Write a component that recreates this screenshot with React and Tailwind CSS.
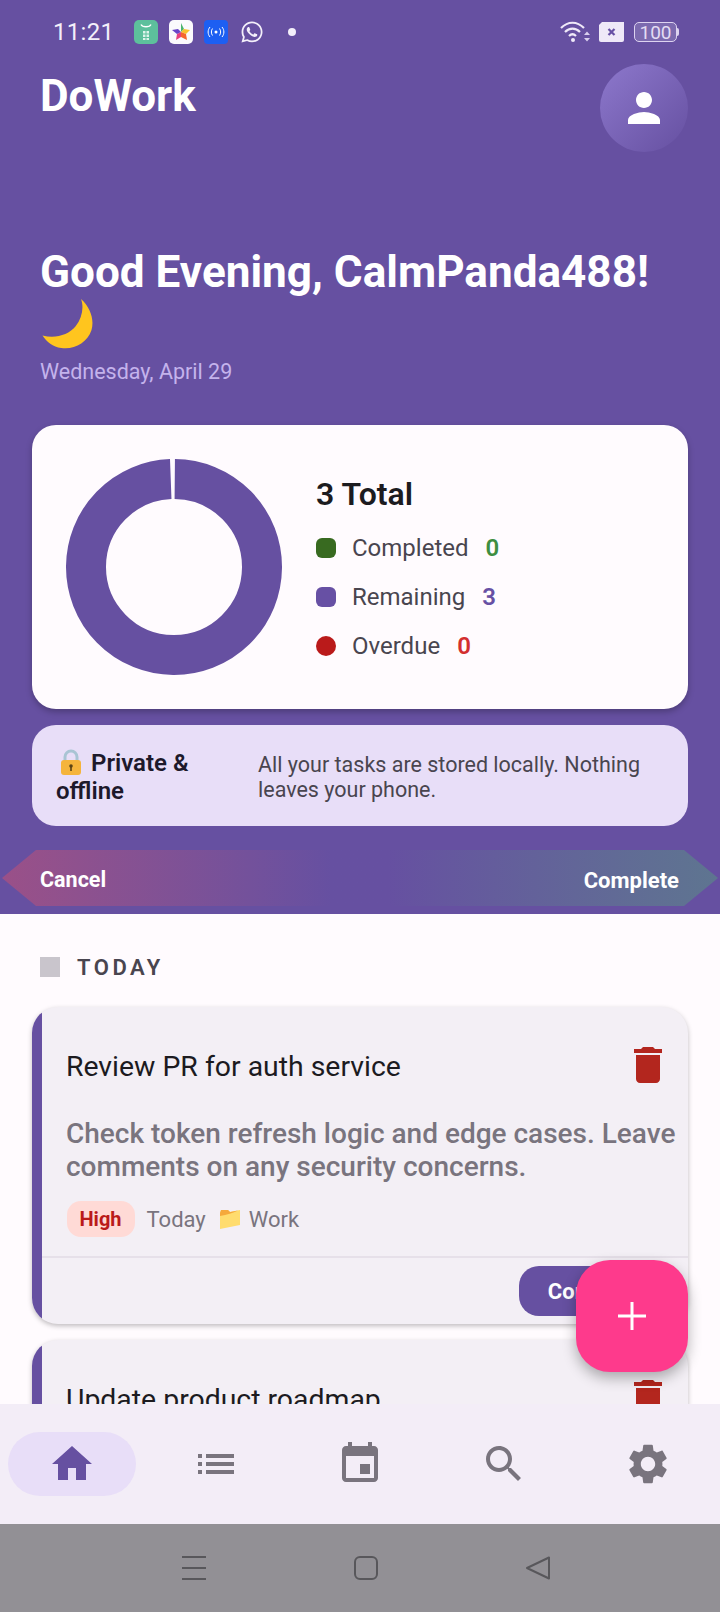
import { FaWhatsapp } from "react-icons/fa"

const legend = [
  { label: "Completed", value: 0, swatch: "bg-[#386A20] rounded-[6px]", text: "text-[#3E8E41]" },
  { label: "Remaining", value: 3, swatch: "bg-[#6750A4] rounded-[6px]", text: "text-[#6750A4]" },
  { label: "Overdue", value: 0, swatch: "bg-[#BA1A1A] rounded-full", text: "text-[#D32F2F]" },
]

const navIcons = [
  "M10 20v-6h4v6h5v-8h3L12 3 2 12h3v8z",
  "M3 13h2v-2H3v2zm0 4h2v-2H3v2zm0-8h2V7H3v2zm4 4h14v-2H7v2zm0 4h14v-2H7v2zM7 7v2h14V7H7z",
  "M17 12h-5v5h5v-5zM16 1v2H8V1H6v2H5c-1.11 0-1.99.9-1.99 2L3 19c0 1.1.89 2 2 2h14c1.1 0 2-.9 2-2V5c0-1.1-.9-2-2-2h-1V1h-2zm3 18H5V8h14v11z",
  "M15.5 14h-.79l-.28-.27C15.41 12.59 16 11.11 16 9.5 16 5.91 13.09 3 9.5 3S3 5.91 3 9.5 5.91 16 9.5 16c1.61 0 3.09-.59 4.23-1.57l.27.28v.79l5 4.99L20.49 19l-4.99-5zm-6 0C7.01 14 5 11.99 5 9.5S7.01 5 9.5 5 14 7.01 14 9.5 11.99 14 9.5 14z",
  "M19.14 12.94c.04-.3.06-.61.06-.94 0-.32-.02-.64-.07-.94l2.03-1.58c.18-.14.23-.41.12-.61l-1.92-3.32c-.12-.22-.37-.29-.59-.22l-2.39.96c-.5-.38-1.03-.7-1.62-.94l-.36-2.54c-.04-.24-.24-.41-.48-.41h-3.84c-.24 0-.43.17-.47.41l-.36 2.54c-.59.24-1.13.57-1.62.94l-2.39-.96c-.22-.08-.47 0-.59.22L2.74 8.87c-.12.21-.08.47.12.61l2.03 1.58c-.05.3-.09.63-.09.94s.02.64.07.94l-2.03 1.58c-.18.14-.23.41-.12.61l1.92 3.32c.12.22.37.29.59.22l2.39-.96c.5.38 1.03.7 1.62.94l.36 2.54c.05.24.24.41.48.41h3.84c.24 0 .44-.17.47-.41l.36-2.54c.59-.24 1.13-.56 1.62-.94l2.39.96c.22.08.47 0 .59-.22l1.92-3.32c.12-.22.07-.47-.12-.61l-2.01-1.58zM12 15.6c-1.98 0-3.6-1.62-3.6-3.6s1.62-3.6 3.6-3.6 3.6 1.62 3.6 3.6-1.62 3.6-3.6 3.6z",
]

const TrashIcon = () => (
  <svg viewBox="0 0 24 24" className="w-12 h-12 shrink-0 fill-[#B3261E]">
    <path d="M6 19c0 1.1.9 2 2 2h8c1.1 0 2-.9 2-2V7H6v12zM19 4h-3.5l-1-1h-5l-1 1H5v2h14V4z" />
  </svg>
)

const StatusBar = () => (
  <div className="h-16 flex items-center pl-[53px] pr-[41px]">
    <span className="text-[24px] text-[#F3EFFA] w-[81px] tracking-[0.3px]">11:21</span>
    {/* notification icons */}
    <svg viewBox="0 0 24 24" className="w-6 h-6">
      <rect width="24" height="24" rx="5" fill="#5DC09C" />
      <path d="M7 4.5c1.5 3 8.500 3 10 0" fill="none" stroke="#fff" strokeWidth="1.3" />
      <path d="M9 11h2.500v2.500H9zM12.500 11H15v2.500h-2.500zM9 14.500h2.500V17H9zM12.500 14.500H15V17h-2.500zM9 18h2.500v2H9zM12.500 18H15v2h-2.500z" fill="#DDF3EA" />
    </svg>
    <svg viewBox="0 0 24 24" className="w-6 h-6 ml-[11px]">
      <rect width="24" height="24" rx="5" fill="#FBFAFD" />
      <path d="M12 3l3 6-3 3z" fill="#4CB56E" />
      <path d="M15 9l6 1-4 4-5-2z" fill="#F9C22E" />
      <path d="M17 14l1 6-6-3v-5z" fill="#F5662E" />
      <path d="M12 17l-5 3 1-6 4-2z" fill="#E8417E" />
      <path d="M8 14l-5-4 6-1 3 3z" fill="#6A45C8" />
    </svg>
    <svg viewBox="0 0 24 24" className="w-6 h-6 ml-[11px]">
      <rect width="24" height="24" rx="4" fill="#1D5FF2" />
      <circle cx="12" cy="12" r="1.500" fill="#fff" />
      <path d="M8.500 8.500c-1.500 2-1.500 5 0 7M15.500 8.500c1.500 2 1.500 5 0 7M6 7c-2.500 3-2.500 7 0 10M18 7c2.500 3 2.500 7 0 10" fill="none" stroke="#fff" strokeWidth="1" />
    </svg>
    <FaWhatsapp className="w-6 h-6 ml-3 text-[#F3EFFA]" />
    <span className="w-2 h-2 rounded-full bg-[#F3EFFA] ml-6" />

    <div className="ml-auto flex items-center">
      <svg viewBox="0 0 30 24" className="w-[30px] h-6">
        <path d="M1 8c7-7 16-7 23 0M5 12c4.500-4.500 10.500-4.500 15 0M9 16c2.500-2.500 4.500-2.500 7 0" fill="none" stroke="#EFE9F8" strokeWidth="2.200" />
        <circle cx="13" cy="20" r="2" fill="#EFE9F8" />
        <path d="M24 15l3-3.500 3 3.500zM24 18l3 3.500 3-3.500z" fill="#D9CFEE" />
      </svg>
      <svg viewBox="0 0 25 20" className="w-[25px] h-5 ml-[9px]">
        <path d="M3 0h22v18a2 2 0 0 1-2 2H2a2 2 0 0 1-2-2V3z" fill="#EFE9F8" />
        <path d="M9.500 7l6 6M15.500 7l-6 6" stroke="#6750A4" strokeWidth="2.200" />
      </svg>
      <div className="ml-[10px] flex items-center">
        <div className="w-[43px] h-5 rounded-[5px] border-[1.5px] border-[#DDD3F0] bg-white/15 flex items-center justify-center">
          <span className="text-[19px] leading-none text-[#E4DCF3]">100</span>
        </div>
        <div className="w-[2px] h-2 bg-[#DDD3F0] rounded-r-sm" />
      </div>
    </div>
  </div>
)

const Hero = () => (
  <div className="h-[914px] shrink-0 bg-[#6650A1]">
    <StatusBar />

    <div className="flex items-start justify-between pl-10 pr-8">
      <h2 className="pt-px text-[44px] leading-[62px] font-bold text-white">DoWork</h2>
      <div className="w-[88px] h-[88px] rounded-full bg-gradient-to-br from-[#8D78CC] to-[#6650A1] flex items-center justify-center">
        <svg viewBox="0 0 24 24" className="w-12 h-12 fill-white">
          <path d="M12 12c2.210 0 4-1.790 4-4s-1.790-4-4-4-4 1.790-4 4 1.790 4 4 4zm0 2c-2.670 0-8 1.340-8 4v2h16v-2c0-2.660-5.330-4-8-4z" />
        </svg>
      </div>
    </div>

    <div className="mt-[94px] px-10">
      <h1 className="h-[104px] text-[44.1px] leading-[52px] font-bold text-white">
        Good Evening, CalmPanda488!{" "}
        <svg viewBox="0 0 49 48" className="inline-block w-[52px] h-[50px] ml-[2px] align-[-10px]">
          <path d="M37 0C46 8 50 20 47 30 43 42 30 49 18 47 10 46 4 41 0 35 12 38 25 35 32 26 38 18 40 8 37 0Z" fill="#FFC51E" />
        </svg>
      </h1>
      <p className="mt-2 text-[21.5px] leading-7 text-[#C4B3EC]">Wednesday, April 29</p>
    </div>

    {/* Summary card */}
    <div className="mt-[39px] mx-8 h-[284px] rounded-[24px] bg-[#FFFBFE] shadow-[0_3px_6px_rgba(0,0,0,0.25)] flex items-center pl-[34px]">
      <svg viewBox="0 0 216 216" className="w-[216px] h-[216px] shrink-0">
        <circle
          cx="108"
          cy="108"
          r="88"
          fill="none"
          stroke="#6650A1"
          strokeWidth="40"
          strokeDasharray="547.900 5"
          transform="rotate(-89.500 108 108)"
        />
      </svg>
      <div className="ml-[34px] mb-[3px]">
        <div className="text-[32px] leading-10 font-semibold text-[#1C1B1F]">3 Total</div>
        <div className="mt-[22px] flex flex-col gap-[25px]">
          {legend.map((item) => (
            <div key={item.label} className="flex items-center h-6">
              <span className={`w-5 h-5 ${item.swatch}`} />
              <span className="ml-4 text-[24px] text-[#49454F]">{item.label}</span>
              <span className={`ml-[17px] text-[24px] font-semibold ${item.text}`}>{item.value}</span>
            </div>
          ))}
        </div>
      </div>
    </div>

    {/* Private note */}
    <div className="mt-4 mx-8 h-[101px] rounded-[24px] bg-[#E8DEF8] flex items-center pl-6 pr-5 pt-[2px]">
      <div className="w-[202px] shrink-0 text-[24px] leading-[28px] font-semibold text-[#1D192B]">
        <svg viewBox="0 0 26 26" className="inline-block w-[26px] h-[26px] ml-[2px] mr-[7px] align-[-4px]">
          <path d="M7 12V8a6 6 0 0 1 12 0v4" fill="none" stroke="#A9C4D4" strokeWidth="3" />
          <rect x="3" y="11" width="20" height="15" rx="3" fill="#F5B43C" />
          <circle cx="13" cy="17" r="1.800" fill="#5B4316" />
          <rect x="12.200" y="17" width="1.600" height="5" fill="#5B4316" />
        </svg>
        Private &amp; offline
      </div>
      <p className="text-[21.5px] leading-[25px] text-[#49454F]">All your tasks are stored locally. Nothing leaves your phone.</p>
    </div>

    {/* Swipe hints */}
    <div className="mt-6 h-14 flex px-[2px]">
      <div className="flex-1 pl-[38px] pt-1 flex items-center bg-gradient-to-r from-[#9A5088] to-[#6650A1] to-[92%] [clip-path:polygon(0_50%,34px_0,100%_0,100%_100%,34px_100%)]">
        <span className="text-[21.5px] font-bold text-white">Cancel</span>
      </div>
      <div className="flex-1 pr-[39px] pt-1 flex items-center justify-end bg-gradient-to-l from-[#5E7590] to-[#6650A1] to-[92%] [clip-path:polygon(0_0,calc(100%-34px)_0,100%_50%,calc(100%-34px)_100%,0_100%)]">
        <span className="text-[22px] font-bold text-white">Complete</span>
      </div>
    </div>
  </div>
)

const TaskCard = ({ title, description }) => (
  <div className="flex overflow-hidden rounded-[26px] bg-[#F3EFF5] shadow-[0_2px_5px_rgba(0,0,0,0.25)]">
    <div className="w-[10px] shrink-0 bg-[#6650A1]" />
    <div className="flex-1 min-w-0 pt-[34px] pb-2">
      <div className="flex items-center justify-between pl-[24px] pr-4">
        <h3 className="pt-1 text-[28.4px] leading-9 text-[#1C1B1F]">{title}</h3>
        <TrashIcon />
      </div>
      {description && (
        <>
          <p className="mt-[28px] pl-[24px] pr-1 text-[28px] leading-[33px] font-medium text-[#79747E]">{description}</p>
          <div className="mt-[18px] pl-[24.500px] flex items-center text-[22px] text-[#79747E]">
            <span className="h-9 px-[13px] rounded-[14px] bg-[#FFDAD6] flex items-center text-[20px] font-bold text-[#BA1A1A]">High</span>
            <span className="ml-3">Today</span>
            <svg viewBox="0 0 22 20" className="w-[22px] h-5 ml-[13px] mr-2">
              <path d="M1 20V4l1-3h7l2 2 10-2v15z" fill="#FFDC6E" />
              <path d="M1 7V4l1-3h7l2 2 8-1.500C14 4 8 6 1 7z" fill="#F5A93C" />
            </svg>
            <span>Work</span>
          </div>
          <div className="mt-[19px] border-t-2 border-[#E6E0E9] pt-2 pr-4 flex justify-end">
            <button className="w-[153px] h-[50px] rounded-[20px] bg-[#6650A1] text-[22px] font-bold text-white">Complete</button>
          </div>
        </>
      )}
    </div>
  </div>
)

const TodaySection = () => (
  <div className="flex-1 min-h-0 overflow-hidden px-8 pt-[43px] bg-[#FFFBFE]">
    <div className="flex items-center h-5 pl-2">
      <span className="w-5 h-5 bg-[#C9C5CC]" />
      <span className="ml-[17px] text-[22px] font-semibold tracking-[3.500px] text-[#49454F]">TODAY</span>
    </div>
    <div className="mt-[30px] flex flex-col gap-4">
      <TaskCard
        title="Review PR for auth service"
        description="Check token refresh logic and edge cases. Leave comments on any security concerns."
      />
      <TaskCard title="Update product roadmap" />
    </div>
  </div>
)

const BottomNav = () => (
  <div className="h-[120px] shrink-0 bg-[#F3EDF7] grid grid-cols-5 items-center">
    {navIcons.map((d, i) => (
      <div key={d} className={`mx-auto w-32 h-16 rounded-full flex items-center justify-center ${i === 0 ? "bg-[#E8DEF8]" : ""}`}>
        <svg viewBox="0 0 24 24" className={`w-12 h-12 ${i === 0 ? "fill-[#6650A1]" : "fill-[#79747E]"}`}>
          <path d={d} />
        </svg>
      </div>
    ))}
  </div>
)

const SystemBar = () => (
  <div className="h-[88px] shrink-0 bg-[#929095] flex items-center justify-center gap-[146px] pl-3">
    <svg viewBox="0 0 26 24" className="w-[26px] h-6 stroke-[#58575B] fill-none" strokeWidth="2">
      <path d="M1 1h24M1 12h24M1 23h24" />
    </svg>
    <svg viewBox="0 0 26 24" className="w-[26px] h-6 stroke-[#58575B] fill-none" strokeWidth="2">
      <rect x="2" y="1" width="22" height="22" rx="5" />
    </svg>
    <svg viewBox="0 0 26 24" className="w-[26px] h-6 stroke-[#58575B] fill-none" strokeWidth="2" strokeLinejoin="round">
      <path d="M24 1.500v21L2 12z" />
    </svg>
  </div>
)

export default function App() {
  return (
    <div className="relative w-[720px] h-[1612px] overflow-hidden flex flex-col bg-[#6650A1] font-[Roboto,sans-serif]">
      <Hero />
      <TodaySection />
      <BottomNav />
      <SystemBar />

      {/* FAB */}
      <button className="absolute right-8 bottom-[240px] w-28 h-28 rounded-[34px] bg-[#FE3A8C] shadow-[0_6px_14px_rgba(0,0,0,0.3)] flex items-center justify-center">
        <svg viewBox="0 0 28 28" className="w-7 h-7 stroke-white" strokeWidth="3">
          <path d="M14 0v28M0 14h28" />
        </svg>
      </button>
    </div>
  )
}
